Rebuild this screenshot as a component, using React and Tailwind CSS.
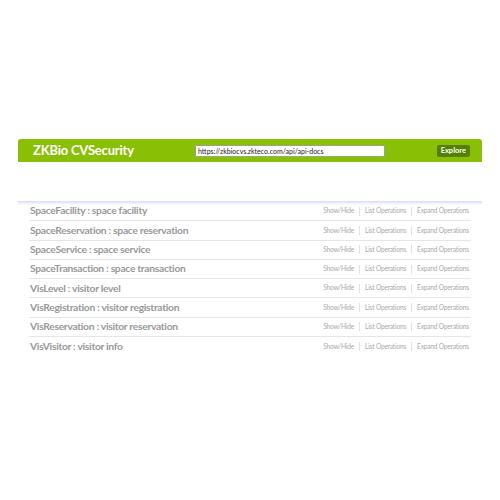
const resources = [
  ["SpaceFacility", "space facility"],
  ["SpaceReservation", "space reservation"],
  ["SpaceService", "space service"],
  ["SpaceTransaction", "space transaction"],
  ["VisLevel", "visitor level"],
  ["VisRegistration", "visitor registration"],
  ["VisReservation", "visitor reservation"],
  ["VisVisitor", "visitor info"],
];

const App = () => {
  return (
    <div className="w-[500px] h-[500px] bg-white pt-[139px] px-[18px]" style={{ fontFamily: "Lato, 'Liberation Sans', sans-serif" }}>
      {/* Header */}
      <div className="h-[23px] bg-[#89bf04] rounded-t-[3px] flex items-center pl-[15px] pr-[12px]">
        <span className="text-white font-bold text-[13px] w-[162px] tracking-[-0.2px]">ZKBio CVSecurity</span>
        <input
          readOnly
          value="https://zkbiocvs.zkteco.com/api/api-docs"
          className="w-[190px] h-[12px] bg-white border border-[#9aa58a] text-[7px] text-[#222] px-[2px] leading-none focus:outline-none"
        />
        <div className="flex-1" />
        <button className="h-[12px] px-[4px] bg-[#547f00] text-white text-[7.5px] font-bold rounded-[2px] leading-none">
          Explore
        </button>
      </div>

      {/* Gap */}
      <div className="h-[39px]" />

      {/* Resource list */}
      <div className="bg-gradient-to-b from-[#d8dcf5] to-white h-[4px]" />
      <div className="px-[11px] -mt-[3px]">
        {resources.map(([name, desc], i) => (
          <div
            key={name}
            className={`h-[19.3px] flex items-center justify-between pl-[1px] pr-[2px] ${i < resources.length - 1 ? "border-b border-[#e6e6e6]" : ""}`}
          >
            <span className="text-[10.3px] font-bold text-[#999999] tracking-[-0.3px]">
              {name} : {desc}
            </span>
            <div className="flex items-center text-[6.6px] text-[#aaaaaa] tracking-[-0.2px]">
              <span>Show/Hide</span>
              <span className="w-px h-[9px] bg-[#e2e2e2] mx-[5px]" />
              <span>List Operations</span>
              <span className="w-px h-[9px] bg-[#e2e2e2] mx-[5px]" />
              <span>Expand Operations</span>
            </div>
          </div>
        ))}
      </div>
    </div>
  );
};

export default App;
